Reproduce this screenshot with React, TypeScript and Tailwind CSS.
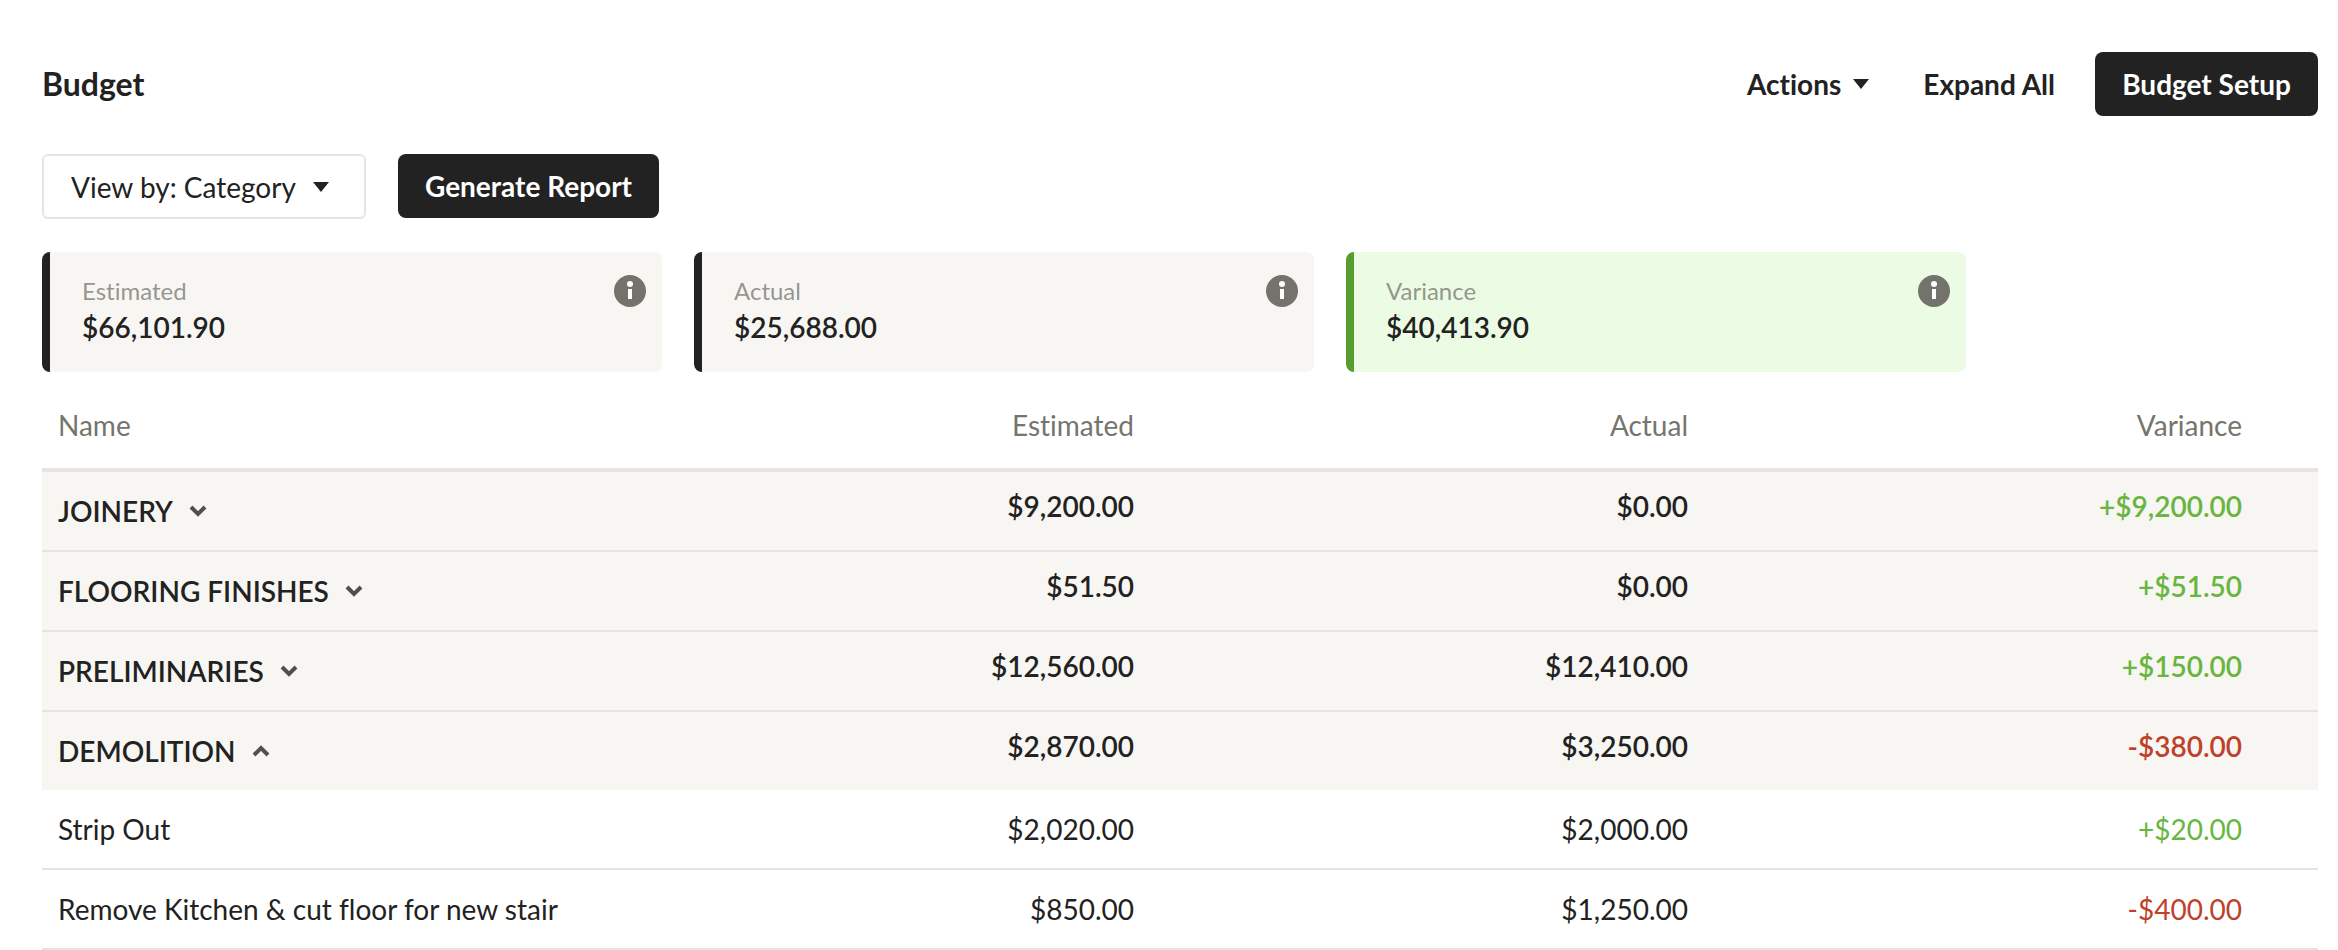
import { useState } from 'react';
import clsx from 'clsx';

type Line = {
  name: string;
  estimated: number;
  actual: number;
};

type Category = Line & { items: Line[] };

const summary = [
  { label: 'Estimated', value: 66101.9, positive: false, info: 'Total estimated cost' },
  { label: 'Actual', value: 25688, positive: false, info: 'Total actual cost' },
  { label: 'Variance', value: 40413.9, positive: true, info: 'Estimated less actual' },
];

const categories: Category[] = [
  { name: 'JOINERY', estimated: 9200, actual: 0, items: [] },
  { name: 'FLOORING FINISHES', estimated: 51.5, actual: 0, items: [] },
  { name: 'PRELIMINARIES', estimated: 12560, actual: 12410, items: [] },
  {
    name: 'DEMOLITION',
    estimated: 2870,
    actual: 3250,
    items: [
      { name: 'Strip Out', estimated: 2020, actual: 2000 },
      { name: 'Remove Kitchen & cut floor for new stair', estimated: 850, actual: 1250 },
    ],
  },
];

const money = (n: number) =>
  '$' + Math.abs(n).toLocaleString('en-US', { minimumFractionDigits: 2, maximumFractionDigits: 2 });

const signed = (n: number) => (n < 0 ? '-' : '+') + money(n);

function Caret() {
  return (
    <svg viewBox="0 0 16 10" className="h-[10px] w-4 shrink-0" fill="currentColor" aria-hidden="true">
      <path d="M0 0h16L8 10z" />
    </svg>
  );
}

function Chevron({ open }: { open: boolean }) {
  return (
    <svg
      viewBox="0 0 18 12"
      className={clsx('h-3 w-[18px] text-[#50504c]', open && 'rotate-180')}
      fill="none"
      stroke="currentColor"
      strokeWidth="4"
      aria-hidden="true"
    >
      <path d="M2 2l7 7 7-7" />
    </svg>
  );
}

function InfoIcon() {
  return (
    <svg viewBox="0 0 32 32" className="size-8" aria-hidden="true">
      <circle cx="16" cy="16" r="16" fill="#74736b" />
      <circle cx="16" cy="9" r="3" fill="#fff" />
      <path d="M14 14h4v10h-4z" fill="#fff" />
    </svg>
  );
}

export default function App() {
  const [open, setOpen] = useState<string[]>(['DEMOLITION']);

  const toggle = (name: string) =>
    setOpen((prev) => (prev.includes(name) ? prev.filter((n) => n !== name) : [...prev, name]));

  return (
    <main className="pt-[52px] pr-5 pl-[42px] font-['Lato',sans-serif] text-[28px] leading-10 text-[#222] [font-variant-ligatures:none]">
      {/* Header */}
      <header className="flex items-center justify-between">
        <h1 className="text-[32px] font-bold">Budget</h1>
        <div className="flex h-16 items-center font-bold">
          <button type="button" className="mr-[54px] flex items-center gap-3">
            Actions
            <Caret />
          </button>
          <button type="button" className="mr-10" onClick={() => setOpen(categories.map((c) => c.name))}>
            Expand All
          </button>
          <button type="button" className="h-16 w-[223px] rounded-lg bg-[#222] text-white">
            Budget Setup
          </button>
        </div>
      </header>

      {/* Toolbar */}
      <div className="mt-[38px] flex gap-8">
        <div className="flex h-[65px] w-[324px] items-center gap-4 rounded-md border-2 border-[#e6e5df] pl-[27px]">
          <select aria-label="View by" className="appearance-none bg-transparent outline-none">
            <option>View by: Category</option>
          </select>
          <Caret />
        </div>
        <button type="button" className="h-16 w-[261px] rounded-lg bg-[#222] font-bold text-white">
          Generate Report
        </button>
      </div>

      {/* Summary cards */}
      <div className="mt-[33px] flex gap-8">
        {summary.map((card) => (
          <section
            key={card.label}
            className={clsx(
              'flex h-[120px] max-w-[620px] flex-1 items-start justify-between rounded-lg border-l-8 pt-[23px] pr-4 pl-8',
              card.positive ? 'border-[#569d2f] bg-[#ecfbe3]' : 'border-[#222] bg-[#f7f6f2]'
            )}
          >
            <div>
              <p className="text-2xl text-[#6b6a63]/70">{card.label}</p>
              <p className="font-semibold">{money(card.value)}</p>
            </div>
            <button type="button" aria-label={card.info}>
              <InfoIcon />
            </button>
          </section>
        ))}
      </div>

      {/* Budget table */}
      <table className="w-full table-fixed border-separate border-spacing-0">
        <thead>
          <tr className="h-[100px] text-[#75746d]">
            <th className="border-b-4 border-[#e8e3de] px-4 pt-[10px] text-left font-normal">Name</th>
            <th className="border-b-4 border-[#e8e3de] px-4 pt-[10px] text-right font-normal">Estimated</th>
            <th className="border-b-4 border-[#e8e3de] px-4 pt-[10px] text-right font-normal">Actual</th>
            <th className="border-b-4 border-[#e8e3de] px-4 pt-[10px] text-right font-normal">Variance</th>
            <td className="w-[60px] border-b-4 border-[#e8e3de]"></td>
          </tr>
        </thead>
        {categories.map((cat) => {
          const isOpen = open.includes(cat.name);
          const showItems = isOpen && cat.items.length > 0;
          const variance = cat.estimated - cat.actual;
          const line = showItems ? '' : 'border-b-2 border-[#e5e4e0]';
          return (
            <tbody key={cat.name}>
              <tr className={clsx('bg-[#f7f6f2] font-semibold', showItems ? 'h-[78px]' : 'h-20')}>
                <td className={clsx('px-4 whitespace-nowrap', line)}>
                  <button
                    type="button"
                    className="flex items-center gap-4"
                    aria-expanded={isOpen}
                    onClick={() => toggle(cat.name)}
                  >
                    {cat.name}
                    <Chevron open={isOpen} />
                  </button>
                </td>
                <td className={clsx('px-4 pt-[14px] text-right align-top', line)}>{money(cat.estimated)}</td>
                <td className={clsx('px-4 pt-[14px] text-right align-top', line)}>{money(cat.actual)}</td>
                <td
                  className={clsx(
                    'px-4 pt-[14px] text-right align-top',
                    line,
                    variance < 0 ? 'text-[#c0412a]' : 'text-[#68b53f]'
                  )}
                >
                  {signed(variance)}
                </td>
                <td className={line}></td>
              </tr>
              {showItems &&
                cat.items.map((item) => {
                  const diff = item.estimated - item.actual;
                  return (
                    <tr key={item.name} className="h-20">
                      <td className="border-b-2 border-[#e5e4de] px-4 whitespace-nowrap">{item.name}</td>
                      <td className="border-b-2 border-[#e5e4de] px-4 text-right">{money(item.estimated)}</td>
                      <td className="border-b-2 border-[#e5e4de] px-4 text-right">{money(item.actual)}</td>
                      <td
                        className={clsx(
                          'border-b-2 border-[#e5e4de] px-4 text-right',
                          diff < 0 ? 'text-[#c0412a]' : 'text-[#68b53f]'
                        )}
                      >
                        {signed(diff)}
                      </td>
                      <td className="border-b-2 border-[#e5e4de]"></td>
                    </tr>
                  );
                })}
            </tbody>
          );
        })}
      </table>
    </main>
  );
}
